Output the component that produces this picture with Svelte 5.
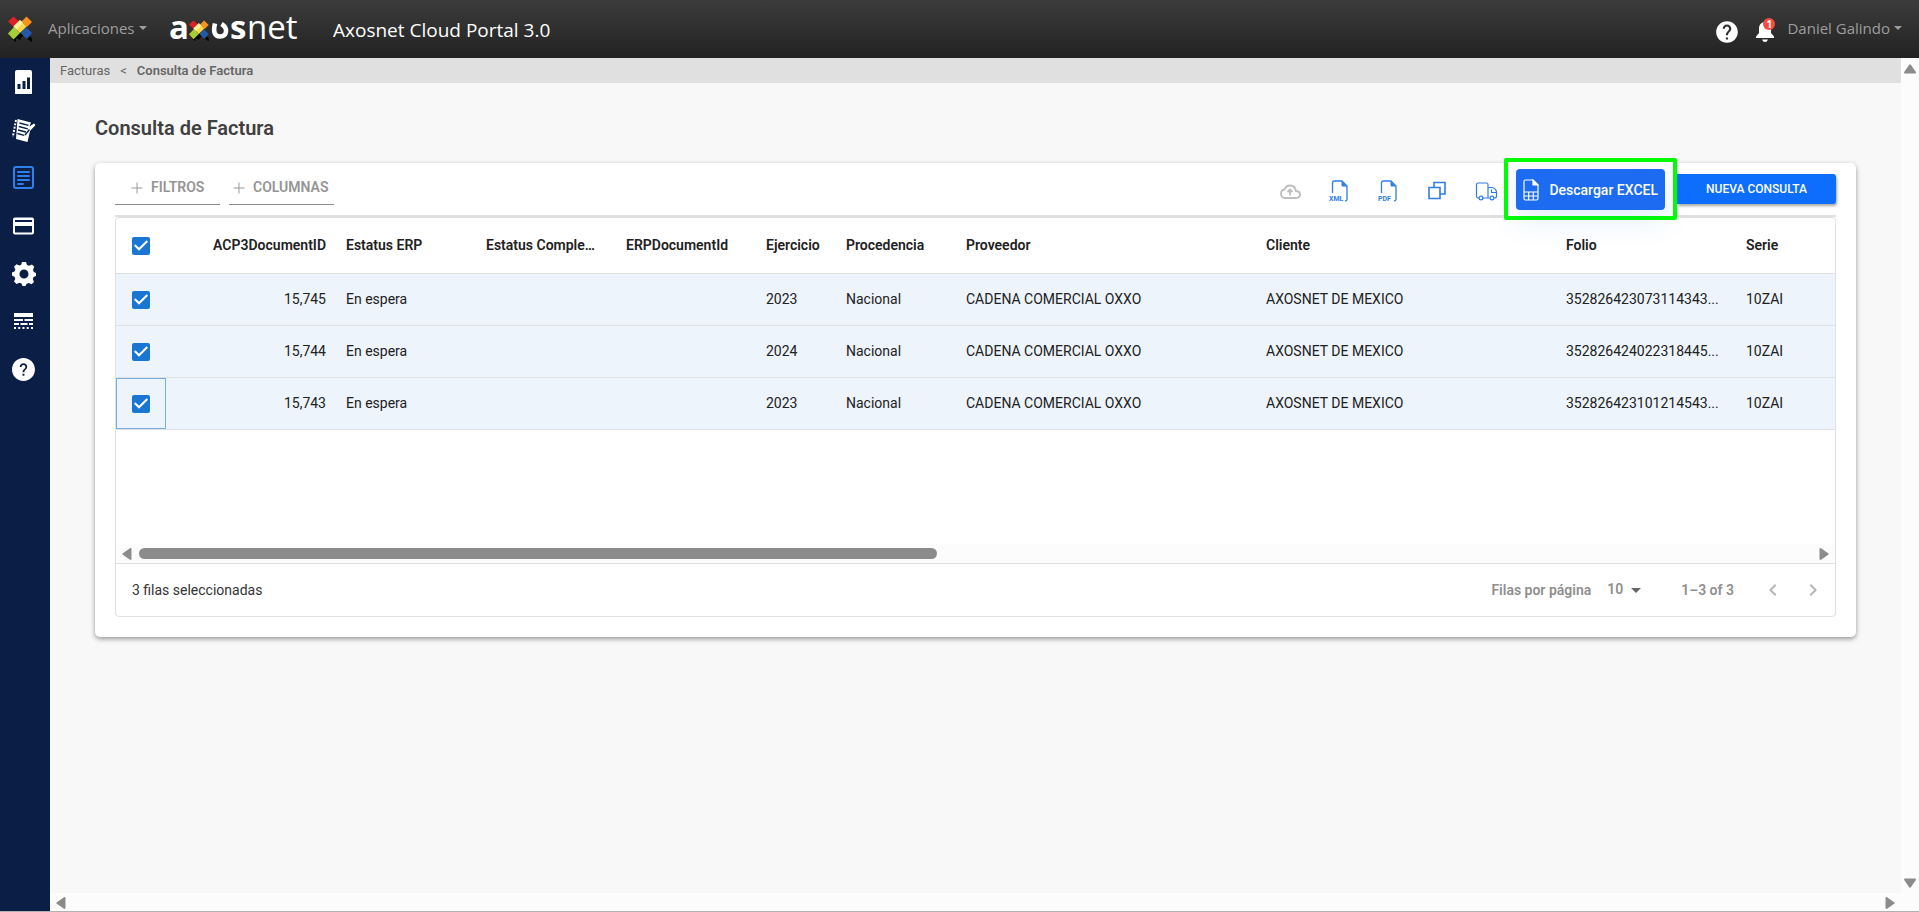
<script lang="ts">
  interface Invoice {
    id: string;
    status: string;
    year: string;
    origin: string;
    supplier: string;
    client: string;
    folio: string;
    serie: string;
    selected: boolean;
  }

  const base = {
    status: "En espera",
    origin: "Nacional",
    supplier: "CADENA COMERCIAL OXXO",
    client: "AXOSNET DE MEXICO",
    serie: "10ZAI",
    selected: true,
  };

  let rows: Invoice[] = $state([
    { ...base, id: "15,745", year: "2023", folio: "352826423073114343..." },
    { ...base, id: "15,744", year: "2024", folio: "352826424022318445..." },
    { ...base, id: "15,743", year: "2023", folio: "352826423101214543..." },
  ]);

  let focused = $state(2);
  let pageSize = $state("10");
  let selectedCount = $derived(rows.filter((r) => r.selected).length);
  let allSelected = $derived(selectedCount === rows.length);

  const thumbWidth = 47.7;

  function toggleAll() {
    const next = !allSelected;
    rows.forEach((r) => (r.selected = next));
  }
</script>

{#snippet mark()}
  <g>
    <path d="M3 15l5 4v7l-4-3zM17 17l7 5v4l-5-3zM9 9l8 7-5 8-4-2z" fill="#000" />
    <path d="M5.500 0.500l5.500 5-5 5.500L0 5.500z" fill="#e01f26" />
    <path d="M18.500 0.500L24 6l-5 5-5.500-5.500z" fill="#f7941e" />
    <path d="M6 11l6 6-6.500 6.500L0 17.500z" fill="#a6ce39" />
    <path d="M18 11l6 6-5 6-6.500-6z" fill="#2458a8" />
    <path d="M12 4l6.500 6.500L12 17l-6.500-6.500z" fill="#fcd94b" />
    <path d="M12 4l3 3-6.500 6.500-3-3z" fill="#fff2a0" />
  </g>
{/snippet}

{#snippet arrow(dir: string)}
  <svg class="arrow" viewBox="0 0 12 12" width="12" height="12">
    {#if dir === "up"}
      <path d="M5.200 1.800q.8-1 1.600 0l5 7.200q.5 1.500-1 1.500H1.200q-1.500 0-1-1.500z" />
    {:else if dir === "down"}
      <path d="M5.200 10.200q.8 1 1.600 0l5-7.200q.5-1.500-1-1.500H1.200q-1.500 0-1 1.500z" />
    {:else if dir === "left"}
      <path d="M1.800 5.200q-1 .8 0 1.600l7.200 5q1.500.5 1.500-1V1.200q0-1.500-1.500-1z" />
    {:else}
      <path d="M10.200 5.200q1 .8 0 1.600l-7.200 5q-1.500.5-1.500-1V1.200q0-1.500 1.500-1z" />
    {/if}
  </svg>
{/snippet}

{#snippet fileOutline()}
  <path d="M5.500 14V4q0-2 2-2H15l5 5v13.500q0 1.500-2 1.500" />
  <path d="M14.500 2v4q0 1.500 1.500 1.500h4z" fill="currentColor" stroke="none" />
{/snippet}

<div class="app">
  <header class="topbar">
    <a class="mark" href="#inicio" aria-label="Inicio">
      <svg viewBox="0 0 25 26" width="25" height="26">{@render mark()}</svg>
    </a>
    <button class="menu apps">Aplicaciones<i class="caret"></i></button>
    <a class="wordmark" href="#inicio" aria-label="Axosnet">
      <svg viewBox="0 -9 136 50" width="136" height="50">
        <text x="1" y="26" font-weight="700">a</text>
        <g transform="translate(21 7) scale(.82)">{@render mark()}</g>
        <path d="M47 10.500c-2 8-.5 13 5 13 7 0 8.500-8.500 1.500-12.500" fill="none" stroke="#fff" stroke-width="4.600" />
        <text x="62" y="26" font-weight="700">s</text>
        <text x="79" y="26">net</text>
      </svg>
    </a>
    <span class="product">Axosnet Cloud Portal 3.0</span>
    <div class="account">
      <button class="plain" aria-label="Ayuda">
        <svg viewBox="0 0 24 24" width="26" height="26">
          <path fill="#fff" d="M12 2C6.480 2 2 6.480 2 12s4.480 10 10 10 10-4.480 10-10S17.520 2 12 2zm1 17h-2v-2h2v2zm2.070-7.750l-.9.920C13.450 12.900 13 13.500 13 15h-2v-.5c0-1.100.45-2.100 1.170-2.830l1.240-1.260c.37-.36.590-.86.590-1.410 0-1.100-.9-2-2-2s-2 .9-2 2H8c0-2.210 1.790-4 4-4s4 1.790 4 4c0 .88-.36 1.680-.93 2.250z" />
        </svg>
      </button>
      <button class="plain bell" aria-label="Notificaciones">
        <svg viewBox="0 0 18 20" width="18" height="20">
          <path fill="#fff" d="M9 0c-4 0-6 3-6 6.500V11L0 14.500V16h18v-1.500L15 11V6.500C15 3 13 0 9 0zM6 17.500h6q-1 2.500-3 2.500t-3-2.500z" />
        </svg>
        <span class="badge">1</span>
      </button>
      <button class="menu">Daniel Galindo<i class="caret"></i></button>
    </div>
  </header>

  <nav class="sidebar" aria-label="Principal">
    <a href="#tablero" aria-label="Tablero">
      <svg viewBox="0 0 24 24"><path fill-rule="evenodd" d="M5 0h13q2 0 2 2v21q0 2-2 2H5q-2 0-2-2V2q0-2 2-2zM5.500 14v5h3v-5zM10.500 11v8h3v-8zM15 7.500V19h3V7.500z" /></svg>
    </a>
    <a href="#ordenes" aria-label="Órdenes">
      <svg viewBox="0 0 24 24">
        <path d="M5.500 1L19 4.500l-1.500 4 4.500-3 1.500 1.500-5.500 6-2.500 11L4 21z" />
        <path d="M7.500 5l9 2.300M6.800 8.500l9 2.300M6 12l8 2M5.300 15.500l7 1.800M17.500 11.500L13 17" stroke="#0a1e46" stroke-width="1.300" fill="none" />
        <path d="M4 2L.8 19" stroke="#fff" stroke-width="2" stroke-dasharray="2 1.400" />
      </svg>
    </a>
    <a href="#facturas" aria-label="Facturas" class="active">
      <svg viewBox="0 0 24 24" fill="none" stroke="currentColor" stroke-width="2" stroke-linecap="round">
        <rect x="2" y="1" width="19" height="21" rx="2" />
        <path d="M6 6h11M6 10h11M6 14h11M6 18h5" stroke-width="1.800" />
      </svg>
    </a>
    <a href="#pagos" aria-label="Pagos">
      <svg viewBox="0 0 24 24"><path fill-rule="evenodd" d="M3 3.500h17q2 0 2 2v13q0 2-2 2H3q-2 0-2-2v-13q0-2 2-2zM3 6v2h17V6zM3 12v6.500h17V12z" /></svg>
    </a>
    <a href="#configuracion" aria-label="Configuración">
      <svg viewBox="0 0 24 24">
        <path fill-rule="evenodd" d="M10 0h4l1 3 2 .8 3-1.300 2.200 2.200L21 8l.8 2 2.200 1v3l-2.500 1-.7 2 1.200 3-2.500 2.200-2.800-1.300-2 .8L13.500 24h-3l-1-2.500-2-.7-3 1.200L2 19.500l1.300-2.800-.8-2L0 13.500v-3l2.500-1 .8-2L2 4.700 4.500 2.200l3 1.400 1.700-.8zM12 7.500a4.500 4.500 0 1 0 0 9 4.500 4.500 0 0 0 0-9z" />
      </svg>
    </a>
    <a href="#estilos" aria-label="Estilos">
      <svg viewBox="0 0 24 24"><path d="M2 3h19v4H2zM2 9h9v2H2zM12.500 9H21v2h-8.500zM2 13h5v2H2zM8.500 13h7v2h-7zM17 13h4v2h-4zM2 17h2v2H2zM6.200 17h2v2h-2zM10.500 17h2v2h-2zM14.700 17h2v2h-2zM19 17h2v2h-2z" /></svg>
    </a>
    <a href="#ayuda" aria-label="Ayuda">
      <svg viewBox="1 1 23 23"><path d="M12 1C5.900 1 1 5.900 1 12s4.900 11 11 11 11-4.900 11-11S18.100 1 12 1zm.9 17h-1.800v-1.800h1.800V18zm2-6.800c-.9 1.300-2 1.500-2 3.400h-1.800c0-2.800 2.700-3.200 2.700-5 0-1.100-.8-1.800-1.800-1.800S10.200 8.500 10.200 9.600H8.400C8.400 7.500 10 6 12 6s3.600 1.500 3.600 3.600c0 .6-.3 1.100-.7 1.600z" /></svg>
    </a>
  </nav>

  <main class="content">
    <div class="breadcrumb">
      <a href="#facturas">Facturas</a>
      <span>&lt;</span>
      <strong>Consulta de Factura</strong>
    </div>

    <div class="page">
      <h1>Consulta de Factura</h1>

      <section class="card">
        <div class="toolbar">
          <div class="tabs">
            <button class="tab">
              <svg viewBox="0 0 12 12" width="12" height="12"><path d="M6 .5v11M.5 6h11" /></svg>FILTROS
            </button>
            <button class="tab">
              <svg viewBox="0 0 12 12" width="12" height="12"><path d="M6 .5v11M.5 6h11" /></svg>COLUMNAS
            </button>
          </div>

          <div class="actions">
            <button class="plain disabled" aria-label="Subir">
              <svg viewBox="0 0 24 24" fill="none" stroke="currentColor" stroke-width="1.800">
                <path d="M7 19h11q4-.2 4-3.500 0-3.200-4-3.500Q17 6.500 12 6.500q-4 0-5.500 4Q3 11 3 15q.3 4 4 4z" />
                <path d="M12 16.500V11M9.500 13L12 10.500l2.500 2.500" />
              </svg>
            </button>
            <button class="plain" aria-label="XML">
              <svg viewBox="0 0 24 24" fill="none" stroke="currentColor" stroke-width="1.300">
                {@render fileOutline()}
                <text x="2" y="22">XML</text>
              </svg>
            </button>
            <button class="plain" aria-label="PDF">
              <svg viewBox="0 0 24 24" fill="none" stroke="currentColor" stroke-width="1.300">
                {@render fileOutline()}
                <text x="2" y="22">PDF</text>
              </svg>
            </button>
            <button class="plain" aria-label="Copiar">
              <svg viewBox="0 0 24 24" fill="none" stroke="currentColor" stroke-width="1.600">
                <path d="M4 8.500h11v11H4zM9 8.500v-5h11V15h-5" />
              </svg>
            </button>
            <button class="plain" aria-label="Carta porte">
              <svg viewBox="0 0 24 24" fill="none" stroke="currentColor" stroke-width="1.200">
                <path d="M5 19H4q-1.500 0-1.500-1.500v-12Q2.500 4 4 4h8.500Q14 4 14 5.500V19M9 19h6.500M14 8.500h4q4.500 1 4.500 5V17q0 2-2 2M17.500 10.500v3h5" />
                <circle cx="7" cy="19" r="1.900" />
                <circle cx="18" cy="19" r="1.900" />
              </svg>
            </button>
          </div>

          <div class="highlight">
            <button class="excel">
              <svg viewBox="0 0 16 22" width="16" height="22" fill="none" stroke="#fff" stroke-width="1.200">
                <path d="M2.500 1H10l5 5v13.500q0 1.500-1.500 1.500h-11Q1 21 1 19.500v-17Q1 1 2.500 1zM1 13h14M1 17h14M5.700 13v8M10.300 13v8" />
                <path d="M10 1v5h5z" fill="#fff" />
              </svg>
              Descargar EXCEL
            </button>
          </div>
          <button class="primary">NUEVA CONSULTA</button>
        </div>

        <div class="grid">
          <div class="viewport">
            <table>
              <colgroup>
                <col class="w-check" /><col class="w-id" /><col class="w-status" /><col class="w-status" />
                <col class="w-status" /><col class="w-year" /><col class="w-origin" /><col class="w-name" />
                <col class="w-name" /><col class="w-folio" /><col />
              </colgroup>
              <thead>
                <tr>
                  <th class="check">
                    <input type="checkbox" aria-label="Seleccionar todo" checked={allSelected} onchange={toggleAll} />
                  </th>
                  <th class="num">ACP3DocumentID</th>
                  <th>Estatus ERP</th>
                  <th>Estatus Complemento</th>
                  <th>ERPDocumentId</th>
                  <th>Ejercicio</th>
                  <th>Procedencia</th>
                  <th>Proveedor</th>
                  <th>Cliente</th>
                  <th>Folio</th>
                  <th>Serie</th>
                </tr>
              </thead>
              <tbody>
                {#each rows as row, i}
                  <tr class:selected={row.selected}>
                    <td class="check" class:focused={focused === i}>
                      <input
                        type="checkbox"
                        aria-label="Seleccionar {row.id}"
                        bind:checked={row.selected}
                        onclick={() => (focused = i)}
                      />
                    </td>
                    <td class="num">{row.id}</td>
                    <td>{row.status}</td>
                    <td></td>
                    <td></td>
                    <td>{row.year}</td>
                    <td>{row.origin}</td>
                    <td>{row.supplier}</td>
                    <td>{row.client}</td>
                    <td>{row.folio}</td>
                    <td>{row.serie}</td>
                  </tr>
                {/each}
              </tbody>
            </table>
          </div>

          <div class="grid-scroll">
            {@render arrow("left")}
            <div class="track"><div class="thumb" style="width: {thumbWidth}%"></div></div>
            {@render arrow("right")}
          </div>

          <footer class="grid-footer">
            <span class="count">{selectedCount} filas seleccionadas</span>
            <label for="page-size">Filas por página</label>
            <div class="select">
              <select id="page-size" bind:value={pageSize}>
                <option>10</option>
                <option>25</option>
                <option>50</option>
              </select>
              <i class="caret"></i>
            </div>
            <span class="range">1–3 of 3</span>
            <button class="plain pager" aria-label="Página anterior" disabled>
              <svg viewBox="0 0 24 24"><path d="M15.400 7.400L14 6l-6 6 6 6 1.400-1.400L10.800 12z" /></svg>
            </button>
            <button class="plain pager" aria-label="Página siguiente" disabled>
              <svg viewBox="0 0 24 24"><path d="M8.600 16.600L10 18l6-6-6-6-1.400 1.400L13.200 12z" /></svg>
            </button>
          </footer>
        </div>
      </section>
    </div>
  </main>

  <div class="vscroll">{@render arrow("up")}{@render arrow("down")}</div>
  <div class="hscroll">{@render arrow("left")}{@render arrow("right")}</div>
</div>

<style>
  :global(body) {
    margin: 0;
  }
  .app {
    display: grid;
    grid-template-columns: 50px minmax(0, 1fr) 18px;
    grid-template-rows: 58px 1fr 18px;
    box-sizing: border-box;
    min-height: 100vh;
    border-bottom: 1px solid #b2b0b0;
    background: #f8f8f8;
    color: #212121;
    font-family: Roboto, sans-serif;
    font-size: 14px;
  }
  button {
    font-family: inherit;
    cursor: pointer;
  }
  .plain {
    display: flex;
    padding: 0;
    border: none;
    background: none;
    color: inherit;
  }

  .topbar {
    grid-column: 1 / -1;
    display: flex;
    align-items: center;
    padding: 0 17px 0 8px;
    background: linear-gradient(#3c3c3c, #222);
    font-family: "Open Sans", sans-serif;
  }
  .mark,
  .wordmark {
    display: flex;
  }
  .menu {
    display: flex;
    align-items: center;
    gap: 4px;
    padding: 0 0 2px;
    border: none;
    background: none;
    color: #9d9d9d;
    font-size: 15px;
    line-height: 24px;
  }
  .apps {
    width: 100px;
    margin: 0 20px 0 15px;
  }
  .caret {
    border: 4px solid transparent;
    border-top-color: currentColor;
    border-bottom: 0;
  }
  .wordmark svg {
    fill: #fff;
    font-family: "Open Sans", sans-serif;
    font-size: 33px;
  }
  .product {
    padding-top: 2px;
    margin-left: 29px;
    color: #fff;
    font-size: 19px;
    line-height: 28px;
  }
  .account {
    display: flex;
    align-items: center;
    margin-left: auto;
  }
  .bell {
    position: relative;
    margin: 0 13px 0 16px;
  }
  .badge {
    position: absolute;
    top: 2px;
    right: -1px;
    width: 12px;
    border-radius: 50%;
    background: #fb4b3e;
    color: #fff;
    font-size: 10px;
    font-weight: 700;
    line-height: 12px;
    text-align: center;
  }
  .account .plain {
    padding-top: 6px;
  }

  .sidebar {
    grid-row: 2 / -1;
    display: flex;
    flex-direction: column;
    gap: 24px;
    padding: 12px 0 0 12px;
    background: #0a1e46;
  }
  .sidebar a {
    display: flex;
    color: #fff;
  }
  .sidebar .active {
    color: #2f80ed;
  }
  .sidebar svg {
    width: 24px;
    height: 24px;
  }
  .sidebar svg:not([fill]) {
    fill: currentColor;
  }

  .breadcrumb {
    display: flex;
    gap: 10px;
    padding: 0 10px;
    background: #e0e0e0;
    color: #666;
    font-size: 13px;
    line-height: 25px;
  }
  .breadcrumb strong {
    font-weight: 600;
  }
  .breadcrumb a {
    color: inherit;
    text-decoration: none;
  }
  .page {
    padding: 31px 45px;
  }
  h1 {
    margin: 0 0 21px;
    color: #404040;
    font-size: 20px;
    font-weight: 600;
    line-height: 28px;
  }
  .card {
    padding: 0 20px 20px;
    border-radius: 5px;
    background: #fff;
    box-shadow: 0 2px 5px rgba(0, 0, 0, 0.4);
  }

  .toolbar {
    display: flex;
    align-items: center;
    height: 52px;
    border-bottom: 2px solid #e0e0e0;
  }
  .tabs {
    display: flex;
    gap: 9px;
    align-self: flex-end;
    margin: 0 auto 10px 0;
  }
  .tab {
    display: flex;
    align-items: center;
    gap: 8px;
    box-sizing: border-box;
    width: 105px;
    height: 36px;
    padding: 0 0 0 16px;
    border: none;
    border-bottom: 1px solid #8c8c8c;
    background: none;
    color: #949494;
    font-size: 14px;
    font-weight: 600;
    white-space: nowrap;
  }
  .tab + .tab {
    padding-left: 4px;
  }
  .tab svg {
    flex: none;
    margin-top: 3px;
    stroke: #999;
  }
  .actions {
    display: flex;
    gap: 25px;
    padding-top: 3px;
    margin-right: 6px;
    color: #2f7de9;
  }
  .actions svg {
    width: 24px;
    height: 24px;
  }
  .actions text {
    fill: currentColor;
    stroke: none;
    font-size: 7px;
    font-weight: 700;
  }
  .disabled {
    color: #bdbdbd;
  }
  .highlight {
    z-index: 1;
    padding: 7px 8px 6px;
    border: 4px solid #0f0;
    border-radius: 2px;
    background: #fff;
  }
  .excel {
    display: flex;
    align-items: center;
    gap: 10px;
    height: 41px;
    padding: 1px 7px 0 7px;
    border: none;
    border-radius: 4px;
    background: #1c6bf0;
    box-shadow: 0 10px 30px rgba(28, 107, 240, 0.12);
    color: #fff;
    font-size: 14px;
    font-weight: 500;
    white-space: nowrap;
  }
  .primary {
    width: 159px;
    height: 30px;
    border: none;
    border-radius: 0 3px 3px 0;
    background: #0d6efd;
    box-shadow: 1px 2px 3px rgba(0, 0, 0, 0.35);
    color: #fff;
    font-size: 12px;
    font-weight: 500;
  }

  .grid {
    border: 1px solid #e0e0e0;
    border-radius: 4px;
  }
  .viewport {
    height: 326px;
    overflow: hidden;
  }
  table {
    width: 100%;
    table-layout: fixed;
    border-collapse: separate;
    border-spacing: 0;
  }
  .w-check { width: 50px; }
  .w-id { width: 170px; }
  .w-status { width: 140px; }
  .w-year { width: 80px; }
  .w-origin { width: 120px; }
  .w-name { width: 300px; }
  .w-folio { width: 180px; }
  th,
  td {
    box-sizing: border-box;
    height: 52px;
    padding: 0 10px 2px;
    border-bottom: 1px solid #e0e0e0;
    font-weight: 400;
    text-align: left;
    overflow: hidden;
    text-overflow: ellipsis;
    white-space: nowrap;
  }
  th {
    height: 56px;
    font-weight: 600;
  }
  .num {
    text-align: right;
  }
  .check {
    padding: 0;
    text-align: center;
  }
  .focused {
    box-shadow: inset 0 0 0 1px #7bade3;
  }
  .selected {
    background: #edf4fc;
  }
  input {
    appearance: none;
    width: 18px;
    height: 18px;
    margin: 0;
    border: 2px solid #666;
    border-radius: 2px;
    vertical-align: middle;
  }
  input:checked {
    border: none;
    background: #1976d2;
  }
  input:checked::before {
    content: "";
    display: block;
    height: 18px;
    background: #fff;
    clip-path: polygon(7px 14px, 2px 9px, 3.4px 7.6px, 7px 11.2px, 14.6px 3.6px, 16px 5px);
  }

  .arrow {
    flex: none;
    fill: #8b8b8b;
  }
  .grid-scroll {
    display: flex;
    align-items: center;
    gap: 6px;
    height: 19px;
    padding: 0 5px;
    background: #fcfcfc;
  }
  .track {
    flex: 1;
  }
  .thumb {
    height: 11px;
    border-radius: 6px;
    background: #8b8b8b;
  }
  .grid-footer {
    display: flex;
    align-items: center;
    height: 52px;
    padding: 0 10px 0 16px;
    border-top: 1px solid #e0e0e0;
    color: #8f8f8f;
    font-weight: 600;
  }
  .count {
    margin-right: auto;
    color: #333;
    font-weight: 400;
  }
  .select {
    display: flex;
    align-items: center;
    margin: 0 40px 0 16px;
  }
  .select .caret {
    margin-left: -10px;
    border-width: 5px;
    border-bottom: 0;
    border-top-color: #666;
    pointer-events: none;
  }
  select {
    appearance: none;
    width: 34px;
    padding: 0 0 2px;
    border: none;
    background: none;
    color: inherit;
    font: inherit;
  }
  .range {
    margin-right: 27px;
  }
  .pager {
    color: #b5b5b5;
  }
  .pager + .pager {
    margin-left: 16px;
  }
  .pager svg {
    width: 24px;
    height: 24px;
    fill: currentColor;
  }

  .vscroll,
  .hscroll {
    display: flex;
    align-items: center;
    justify-content: space-between;
    background: #fcfcfc;
  }
  .vscroll {
    flex-direction: column;
    padding: 5px 0 4px;
  }
  .hscroll {
    grid-column: 2 / -1;
    padding: 1px 23px 0 5px;
  }
</style>
